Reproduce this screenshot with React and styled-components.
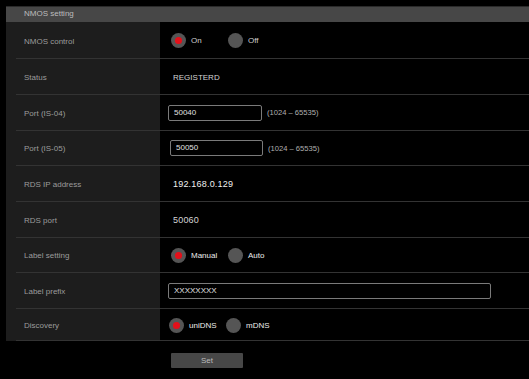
import React from "react";
import styled, { createGlobalStyle } from "styled-components";

const GlobalStyle = createGlobalStyle`
  html, body {
    margin: 0;
    background: #000;
    font-family: "Liberation Sans", Arial, sans-serif;
  }
`;

const Page = styled.div`
  width: 529px;
  height: 379px;
  padding: 6px 0 0 6px;
  box-sizing: border-box;
  overflow: hidden;
`;

const Header = styled.div`
  height: 15px;
  border-top: 1px solid #2a2a2a;
  background: #474747;
  color: #bdbdbd;
  font-size: 8px;
  line-height: 14px;
  padding-left: 18px;
`;

const Table = styled.div`
  background: #1d1d1d;
  padding-left: 10px;
`;

const Row = styled.div`
  display: grid;
  grid-template-columns: 144px 1fr;
  height: 35.67px;
  box-sizing: border-box;
  border-bottom: 1px solid #333;

  &:first-child {
    height: 37.33px;
  }
  &:last-child {
    height: 32.33px;
  }
`;

const Label = styled.div`
  display: flex;
  align-items: center;
  padding: 2px 0 0 8px;
  color: #9c9c9c;
  font-size: 8px;
`;

const Value = styled.div`
  display: flex;
  align-items: center;
  background: #000;
  padding-left: ${(p) => p.$indent ?? 8}px;
  padding-top: 1px;
`;

const Text = styled.span`
  color: ${(p) => (p.$bright ? "#f0f0f0" : "#d4d4d4")};
  font-size: ${(p) => (p.$large ? 9 : 8)}px;
  letter-spacing: ${(p) => (p.$large ? "0.2px" : "0")};
`;

const RadioGroup = styled.div`
  display: flex;
  align-items: center;
`;

const Option = styled.label`
  display: flex;
  align-items: center;
  width: 57px;
  color: ${(p) => (p.$bright ? "#ececec" : "#cfcfcf")};
  font-size: 8px;
`;

const Dot = styled.svg`
  width: 15px;
  height: 15px;
  margin-right: 5px;
  flex-shrink: 0;
`;

const Input = styled.div`
  width: ${(p) => p.$width}px;
  height: 16px;
  box-sizing: border-box;
  border: 1px solid #7a7a7a;
  border-radius: 2px;
  color: #e0e0e0;
  font-size: 8px;
  line-height: 14px;
  padding-left: 5px;
  margin-left: ${(p) => p.$shift ?? 0}px;
`;

const Range = styled.span`
  color: #b0b0b0;
  font-size: 7.6px;
  margin-left: 5px;
`;

const ButtonBar = styled.div`
  padding: 12px 0 0 165px;
`;

const SetButton = styled.div`
  width: 72px;
  height: 15px;
  border-radius: 1px;
  background: #474747;
  color: #bcbcbc;
  font-size: 8px;
  line-height: 15px;
  text-align: center;
`;

const Radios = ({ options, checked, bright }) => (
  <RadioGroup>
    {options.map((o) => (
      <Option key={o} $bright={bright}>
        <Dot viewBox="0 0 16 16">
          <circle cx="8" cy="8" r="8" fill="#555" />
          {o === checked && <circle cx="8" cy="8" r="3.8" fill="#e4101a" />}
        </Dot>
        {o}
      </Option>
    ))}
  </RadioGroup>
);

export default function App() {
  return (
    <Page>
      <GlobalStyle />
      <Header>NMOS setting</Header>
      <Table>
        <Row>
          <Label>NMOS control</Label>
          <Value $indent={11}>
            <Radios options={["On", "Off"]} checked="On" />
          </Value>
        </Row>
        <Row>
          <Label>Status</Label>
          <Value $indent={13}>
            <Text>REGISTERD</Text>
          </Value>
        </Row>
        <Row>
          <Label>Port (IS-04)</Label>
          <Value>
            <Input $width={94}>50040</Input>
            <Range>(1024 – 65535)</Range>
          </Value>
        </Row>
        <Row>
          <Label>Port (IS-05)</Label>
          <Value>
            <Input $width={93} $shift={2}>50050</Input>
            <Range>(1024 – 65535)</Range>
          </Value>
        </Row>
        <Row>
          <Label>RDS IP address</Label>
          <Value $indent={13}>
            <Text $large $bright>192.168.0.129</Text>
          </Value>
        </Row>
        <Row>
          <Label>RDS port</Label>
          <Value $indent={13}>
            <Text $large>50060</Text>
          </Value>
        </Row>
        <Row>
          <Label>Label setting</Label>
          <Value $indent={11}>
            <Radios options={["Manual", "Auto"]} checked="Manual" bright />
          </Value>
        </Row>
        <Row>
          <Label>Label prefix</Label>
          <Value>
            <Input $width={323}>XXXXXXXX</Input>
          </Value>
        </Row>
        <Row>
          <Label>Discovery</Label>
          <Value $indent={9}>
            <Radios options={["uniDNS", "mDNS"]} checked="uniDNS" bright />
          </Value>
        </Row>
      </Table>
      <ButtonBar>
        <SetButton>Set</SetButton>
      </ButtonBar>
    </Page>
  );
}
